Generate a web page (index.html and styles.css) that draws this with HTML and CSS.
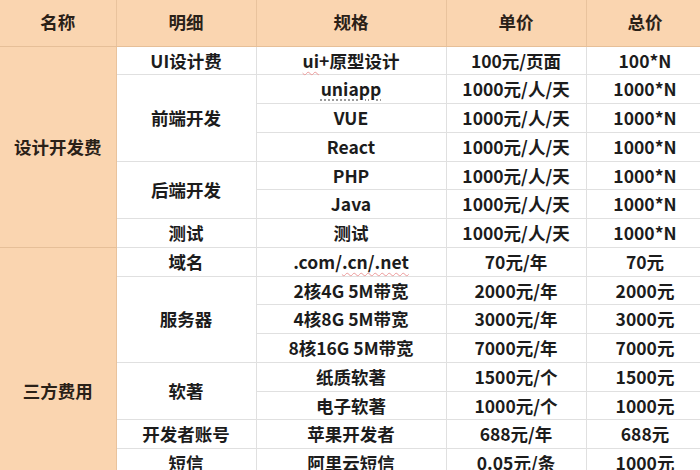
FILE: index.html
```html
<!DOCTYPE html>
<html lang="zh-CN">
<head>
<meta charset="utf-8">
<title>报价表</title>
<link rel="stylesheet" href="styles.css">
</head>
<body>
<table class="quote">
  <colgroup>
    <col class="c1"><col class="c2"><col class="c3"><col class="c4"><col class="c5">
  </colgroup>
  <thead>
    <tr class="head"><th>名称</th><th>明细</th><th>规格</th><th>单价</th><th>总价</th></tr>
  </thead>
  <tbody>
    <tr><td class="sec" rowspan="7">设计开发费</td><td>UI设计费</td><td><span class="spell">ui</span>+原型设计</td><td>100元/页面</td><td>100*N</td></tr>
    <tr><td rowspan="3">前端开发</td><td><span class="dot">uniapp</span></td><td>1000元/人/天</td><td>1000*N</td></tr>
    <tr><td>VUE</td><td>1000元/人/天</td><td>1000*N</td></tr>
    <tr><td>React</td><td>1000元/人/天</td><td>1000*N</td></tr>
    <tr><td rowspan="2">后端开发</td><td>PHP</td><td>1000元/人/天</td><td>1000*N</td></tr>
    <tr><td>Java</td><td>1000元/人/天</td><td>1000*N</td></tr>
    <tr><td>测试</td><td>测试</td><td>1000元/人/天</td><td>1000*N</td></tr>
    <tr><td class="sec" rowspan="11">三方费用</td><td>域名</td><td>.com/<span class="spell">.cn/.net</span></td><td>70元/年</td><td>70元</td></tr>
    <tr><td rowspan="3">服务器</td><td>2核4G 5M带宽</td><td>2000元/年</td><td>2000元</td></tr>
    <tr><td>4核8G 5M带宽</td><td>3000元/年</td><td>3000元</td></tr>
    <tr><td>8核16G 5M带宽</td><td>7000元/年</td><td>7000元</td></tr>
    <tr><td rowspan="2">软著</td><td>纸质软著</td><td>1500元/个</td><td>1500元</td></tr>
    <tr><td>电子软著</td><td>1000元/个</td><td>1000元</td></tr>
    <tr><td>开发者账号</td><td>苹果开发者</td><td>688元/年</td><td>688元</td></tr>
    <tr><td>短信</td><td>阿里云短信</td><td>0.05元/条</td><td>1000元</td></tr>
    <tr><td></td><td></td><td></td><td></td></tr>
    <tr><td></td><td></td><td></td><td></td></tr>
  </tbody>
</table>
</body>
</html>
```

FILE: styles.css
```css
html, body {
  margin: 0;
  padding: 0;
  background: #ffffff;
  overflow: hidden;
}

.quote {
  border-collapse: collapse;
  table-layout: fixed;
  width: 704px;
  font-family: "Noto Sans CJK SC", "Noto Sans", sans-serif;
  font-weight: 700;
  font-size: 17.5px;
  color: #1c1c1c;
}

.c1 { width: 116px; }
.c2 { width: 140px; }
.c3 { width: 190px; }
.c4 { width: 140px; }
.c5 { width: 118px; }

.quote th,
.quote td {
  padding: 0;
  text-align: center;
  vertical-align: middle;
  line-height: 1;
  white-space: nowrap;
}

.quote tr.head {
  height: 46px;
}

.quote th {
  background: #fad5b0;
  color: #2a2118;
  border-right: 1px solid #e9c39d;
  border-bottom: 1px solid #e6bf98;
  padding-bottom: 2px;
}

.quote tbody tr {
  height: 28.75px;
}

.quote td {
  background: #ffffff;
  border: 1px solid #e0e0e0;
  border-top: 0;
  border-left: 0;
}

.quote td.sec {
  background: #fad5b0;
  color: #2a2118;
  border-right: 1px solid #e9c39d;
  border-bottom: 1px solid #e6bf98;
}

.spell {
  text-decoration: underline wavy #ec9a9a;
  text-decoration-thickness: 1px;
  text-underline-offset: 3px;
}

.dot {
  text-decoration: underline dotted #9a9a9a;
  text-decoration-thickness: 2px;
  text-underline-offset: 3px;
}
```
